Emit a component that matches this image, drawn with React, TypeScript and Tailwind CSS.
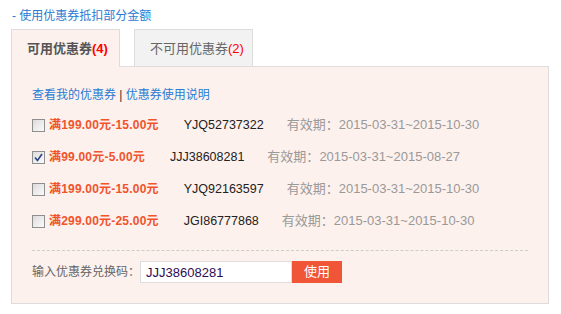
import { useState } from 'react';

const coupons = [
  { id: 1, label: '满199.00元-15.00元', code: 'YJQ52737322', range: '2015-03-31~2015-10-30' },
  { id: 2, label: '满99.00元-5.00元', code: 'JJJ38608281', range: '2015-03-31~2015-08-27' },
  { id: 3, label: '满199.00元-15.00元', code: 'YJQ92163597', range: '2015-03-31~2015-10-30' },
  { id: 4, label: '满299.00元-25.00元', code: 'JGI86777868', range: '2015-03-31~2015-10-30' },
];

const Check = ({ checked, onClick }: { checked: boolean; onClick: () => void }) => (
  <span
    onClick={onClick}
    className="w-[13px] h-[13px] border border-[#8e8f8f] bg-gradient-to-br from-[#dcdcdc] to-[#fbfbfb] flex items-center justify-center shrink-0 cursor-pointer"
  >
    {checked && (
      <svg width="9" height="9" viewBox="0 0 9 9">
        <path d="M1 4.5 L3.5 7.5 L8 1" fill="none" stroke="#2b3f8c" strokeWidth="1.6" />
      </svg>
    )}
  </span>
);

export default function App() {
  const [selected, setSelected] = useState(2);

  return (
    <div
      className="pl-[11px] pt-[6px] w-[549px] text-xs text-[#333]"
      style={{ fontFamily: '"Liberation Sans", "Noto Sans CJK SC", sans-serif' }}
    >
      <div className="leading-[20px] pl-px mb-[3px] text-[#2a7bd3]">- 使用优惠券抵扣部分金额</div>

      <div className="flex items-end">
        <div className="relative z-10 -mb-px w-[109px] h-[38px] border border-b-0 border-[#ddd] bg-[#fdf1ed] pl-[15px] pt-[10px] text-[13px] font-bold text-[#555]">
          可用优惠券<span className="text-[#f00]">(4)</span>
        </div>
        <div className="ml-[14px] w-[119px] h-[37px] border border-b-0 border-[#ddd] bg-[#f2f2f2] pl-[15px] pt-[10px] text-[13px] text-[#666]">
          不可用优惠券<span className="text-[#f00]">(2)</span>
        </div>
      </div>

      <div className="border border-[#ddd] bg-[#fdf1ed] px-5 pt-[18px] pb-5">
        <div className="leading-[20px] text-[#2a7bd3]">
          查看我的优惠券 <span className="text-[#333]">|</span> 优惠券使用说明
        </div>

        <div className="mt-[4px]">
          {coupons.map((c) => (
            <div key={c.id} className="h-8 flex items-center">
              <Check checked={selected === c.id} onClick={() => setSelected(c.id)} />
              <span className="ml-[4px] font-bold text-[#f0542d] tracking-[0.2px]">{c.label}</span>
              <span className="ml-[25px] text-[12.5px] text-[#222]">{c.code}</span>
              <span className="ml-[23px] text-[13px] text-[#999]">有效期：{c.range}</span>
            </div>
          ))}
        </div>

        <div className="mt-[13px] border-t border-dashed border-[#ccc]" />

        <div className="mt-[10px] flex items-center">
          <span className="text-[#666]">输入优惠券兑换码：</span>
          <input
            defaultValue="JJJ38608281"
            className="w-[152px] h-[22px] border border-[#ddd] bg-white px-[5px] text-[13px] text-[#2e0b55] outline-none"
          />
          <button className="w-[50px] h-[22px] bg-[#f05537] text-white text-[13px]">使用</button>
        </div>
      </div>
    </div>
  );
}
